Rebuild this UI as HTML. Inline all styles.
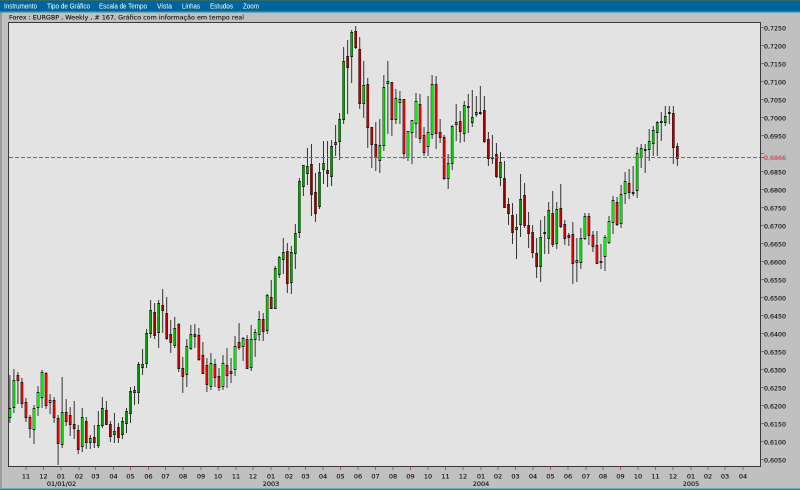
<!DOCTYPE html>
<html><head><meta charset="utf-8"><title>Forex EURGBP</title>
<style>
html,body{margin:0;padding:0;width:800px;height:490px;overflow:hidden;background:#c0c0c0}
svg{display:block;position:absolute;left:0;top:0}
.m{font-family:"Liberation Sans",sans-serif;font-size:7.2px;fill:#fff}
.t{font-family:"DejaVu Sans",sans-serif;font-size:6.5px;fill:#111;stroke:#111;stroke-width:.12}
.x{font-family:"DejaVu Sans",sans-serif;font-size:6.5px;fill:#111;stroke:#111;stroke-width:.12;text-anchor:middle}
</style></head><body>
<svg width="800" height="490" viewBox="0 0 800 490" xmlns="http://www.w3.org/2000/svg">
<rect width="800" height="490" fill="#c0c0c0"/>
<rect x="0" y="12" width="2" height="476" fill="#9c9c9c"/>
<rect width="800" height="1" fill="#2f6a6a"/>
<rect y="1" width="800" height="10" fill="#00659c"/>
<rect y="11" width="800" height="1.5" fill="#1a8c9c"/>
<rect y="488.5" width="800" height="1.5" fill="#2a9088"/>
<g class="mm">
<text class="m" x="4" y="8.5" textLength="33" lengthAdjust="spacingAndGlyphs">Instrumento</text>
<text class="m" x="47" y="8.5" textLength="43" lengthAdjust="spacingAndGlyphs">Tipo de Gráfico</text>
<text class="m" x="99" y="8.5" textLength="48" lengthAdjust="spacingAndGlyphs">Escala de Tempo</text>
<text class="m" x="157" y="8.5" textLength="15" lengthAdjust="spacingAndGlyphs">Vista</text>
<text class="m" x="182" y="8.5" textLength="18" lengthAdjust="spacingAndGlyphs">Linhas</text>
<text class="m" x="210" y="8.5" textLength="23" lengthAdjust="spacingAndGlyphs">Estudos</text>
<text class="m" x="243" y="8.5" textLength="16" lengthAdjust="spacingAndGlyphs">Zoom</text>
</g>
<text class="t" x="9" y="19.5" textLength="235" lengthAdjust="spacingAndGlyphs">Forex : EURGBP , Weekly , # 167, Gráfico com informação em tempo real</text>
<rect x="8.5" y="22.5" width="752" height="444" fill="#e3e3e3"/>
<path d="M8.5 22.5H760.5V466.5H8.5Z" fill="none" stroke="#3a3a3a" stroke-width="1"/>
<g id="chart"></g>
<path d="M9 157.5H760" stroke="#e8343c" stroke-width="1" stroke-dasharray="4 2" fill="none"/>
<g id="ticks"></g>
<text class="t" x="764" y="30.5" textLength="22" lengthAdjust="spacingAndGlyphs">0,7250</text>
<text class="t" x="764" y="48.5" textLength="22" lengthAdjust="spacingAndGlyphs">0,7200</text>
<text class="t" x="764" y="66.5" textLength="22" lengthAdjust="spacingAndGlyphs">0,7150</text>
<text class="t" x="764" y="84.5" textLength="22" lengthAdjust="spacingAndGlyphs">0,7100</text>
<text class="t" x="764" y="102.5" textLength="22" lengthAdjust="spacingAndGlyphs">0,7050</text>
<text class="t" x="764" y="120.5" textLength="22" lengthAdjust="spacingAndGlyphs">0,7000</text>
<text class="t" x="764" y="138.5" textLength="22" lengthAdjust="spacingAndGlyphs">0,6950</text>
<text class="t" x="764" y="160" textLength="22" lengthAdjust="spacingAndGlyphs" style="fill:#f0303c;stroke:#f0303c">0,6866</text>
<text class="t" x="764" y="174.5" textLength="22" lengthAdjust="spacingAndGlyphs">0,6850</text>
<text class="t" x="764" y="192.5" textLength="22" lengthAdjust="spacingAndGlyphs">0,6800</text>
<text class="t" x="764" y="210.5" textLength="22" lengthAdjust="spacingAndGlyphs">0,6750</text>
<text class="t" x="764" y="228.5" textLength="22" lengthAdjust="spacingAndGlyphs">0,6700</text>
<text class="t" x="764" y="246.5" textLength="22" lengthAdjust="spacingAndGlyphs">0,6650</text>
<text class="t" x="764" y="264.5" textLength="22" lengthAdjust="spacingAndGlyphs">0,6600</text>
<text class="t" x="764" y="282.5" textLength="22" lengthAdjust="spacingAndGlyphs">0,6550</text>
<text class="t" x="764" y="300.5" textLength="22" lengthAdjust="spacingAndGlyphs">0,6500</text>
<text class="t" x="764" y="318.5" textLength="22" lengthAdjust="spacingAndGlyphs">0,6450</text>
<text class="t" x="764" y="336.5" textLength="22" lengthAdjust="spacingAndGlyphs">0,6400</text>
<text class="t" x="764" y="354.5" textLength="22" lengthAdjust="spacingAndGlyphs">0,6350</text>
<text class="t" x="764" y="372.5" textLength="22" lengthAdjust="spacingAndGlyphs">0,6300</text>
<text class="t" x="764" y="390.5" textLength="22" lengthAdjust="spacingAndGlyphs">0,6250</text>
<text class="t" x="764" y="408.5" textLength="22" lengthAdjust="spacingAndGlyphs">0,6200</text>
<text class="t" x="764" y="426.5" textLength="22" lengthAdjust="spacingAndGlyphs">0,6150</text>
<text class="t" x="764" y="444.5" textLength="22" lengthAdjust="spacingAndGlyphs">0,6100</text>
<text class="t" x="764" y="462.5" textLength="22" lengthAdjust="spacingAndGlyphs">0,6050</text>
<text class="x" x="26" y="478.5">11</text><text class="x" x="43.5" y="478.5">12</text><text class="x" x="61" y="478.5">01</text><text class="x" x="79" y="478.5">02</text><text class="x" x="95.5" y="478.5">03</text><text class="x" x="113.5" y="478.5">04</text><text class="x" x="130.5" y="478.5">05</text><text class="x" x="148.5" y="478.5">06</text><text class="x" x="165.5" y="478.5">07</text><text class="x" x="183" y="478.5">08</text><text class="x" x="201" y="478.5">09</text><text class="x" x="218" y="478.5">10</text><text class="x" x="236" y="478.5">11</text><text class="x" x="253" y="478.5">12</text><text class="x" x="271" y="478.5">01</text><text class="x" x="289" y="478.5">02</text><text class="x" x="305.5" y="478.5">03</text><text class="x" x="323" y="478.5">04</text><text class="x" x="340.5" y="478.5">05</text><text class="x" x="358" y="478.5">06</text><text class="x" x="375.5" y="478.5">07</text><text class="x" x="393" y="478.5">08</text><text class="x" x="410.5" y="478.5">09</text><text class="x" x="428" y="478.5">10</text><text class="x" x="445.5" y="478.5">11</text><text class="x" x="463" y="478.5">12</text><text class="x" x="481" y="478.5">01</text><text class="x" x="498" y="478.5">02</text><text class="x" x="515.5" y="478.5">03</text><text class="x" x="533" y="478.5">04</text><text class="x" x="550.5" y="478.5">05</text><text class="x" x="568" y="478.5">06</text><text class="x" x="586" y="478.5">07</text><text class="x" x="603" y="478.5">08</text><text class="x" x="620.5" y="478.5">09</text><text class="x" x="638" y="478.5">10</text><text class="x" x="655.5" y="478.5">11</text><text class="x" x="673" y="478.5">12</text><text class="x" x="691" y="478.5">01</text><text class="x" x="708" y="478.5">02</text><text class="x" x="725" y="478.5">03</text><text class="x" x="743" y="478.5">04</text>
<text class="x" x="61.5" y="486">01/01/02</text>
<text class="x" x="271" y="486">2003</text>
<text class="x" x="481" y="486">2004</text>
<text class="x" x="691" y="486">2005</text>
</svg>
<script>
var D="375,408,417,422,g 369,380,407,412,g 372,375,380,403,r 378,382,403,407,r 398,402,417,421,r 415,417,428,437,r 405,408,429,443,g 386,392,407,415,g 370,372,397,407,g 372,373,405,408,r 394,400,402,413,g 397,400,417,422,r 415,418,443,464,r 377,412,444,447,g 399,412,421,425,r 407,415,424,435,r 401,424,428,438,r 425,430,449,453,r 408,417,446,451,g 417,421,442,448,r 435,438,442,448,g 425,437,442,447,r 411,425,445,447,g 397,408,425,427,g 401,410,424,424,r 421,424,436,441,r 413,431,434,442,g 423,427,437,442,r 417,421,434,438,g 408,411,423,432,g 387,391,413,422,g 386,390,392,404,g 362,364,392,403,g 349,364,367,374,g 329,333,363,367,g 300,310,333,337,g 303,312,335,338,r 300,303,332,347,g 289,305,310,332,r 297,313,338,339,r 320,334,342,352,r 317,328,345,347,g 323,324,368,371,r 357,368,376,392,r 339,346,374,386,g 325,334,348,349,g 324,334,336,347,r 328,335,359,360,r 342,355,373,373,r 358,365,384,391,r 353,363,386,389,g 359,364,377,386,r 368,376,387,390,r 355,363,386,389,g 348,365,375,387,r 358,371,373,382,r 336,346,369,375,g 323,342,347,349,r 337,338,346,360,g 335,339,368,368,r 325,339,367,370,g 329,332,339,356,g 311,319,334,340,g 313,319,331,340,r 294,295,330,333,g 280,297,308,308,r 266,268,308,308,g 256,257,274,277,g 238,252,259,273,g 243,251,283,292,r 246,252,282,293,g 224,233,253,268,g 178,181,232,237,g 165,165,186,195,g 148,166,173,184,g 144,164,194,215,r 173,192,213,221,r 163,172,206,208,g 141,163,169,183,g 141,170,173,186,r 140,146,176,185,g 125,142,144,155,g 113,119,141,159,g 47,61,119,123,g 40,56,67,113,r 30,32,56,82,g 26,31,47,48,r 37,49,103,108,r 61,85,103,117,g 78,84,127,147,r 127,127,144,167,r 122,144,157,170,r 119,145,160,172,g 75,87,145,150,g 61,81,83,133,g 82,82,119,135,r 89,98,119,123,g 91,99,102,123,g 99,99,153,158,r 131,131,157,160,g 120,120,132,163,g 93,101,123,137,g 94,104,138,142,r 127,135,152,155,r 96,132,146,155,g 75,84,134,138,g 76,84,133,148,r 119,132,137,142,r 135,137,178,179,r 154,163,178,188,g 125,126,163,169,g 104,122,124,140,g 111,121,131,142,r 101,105,133,141,g 94,106,107,132,r 90,117,122,126,g 96,112,114,116,g 86,112,113,114,r 96,110,141,142,r 132,139,158,165,r 135,157,158,163,r 143,154,176,177,r 152,162,177,185,g 161,178,207,207,r 198,204,213,224,r 203,215,232,243,r 214,227,229,258,g 174,199,224,236,g 183,195,225,227,r 212,225,233,247,r 225,232,252,257,r 238,253,266,277,r 220,237,266,281,g 216,232,233,253,r 202,210,238,253,g 191,213,244,246,r 202,209,243,248,g 184,208,226,227,r 220,224,238,244,r 233,235,237,245,r 222,234,263,283,r 238,260,262,281,g 228,238,262,268,g 213,216,238,239,g 213,216,235,244,r 231,235,246,251,r 231,245,263,263,r 244,261,262,268,r 235,237,256,270,g 216,221,242,243,g 196,200,222,233,g 197,202,224,225,r 185,194,223,227,g 172,181,193,203,g 169,183,192,198,r 166,192,193,195,g 147,153,190,197,g 144,148,157,167,g 144,149,150,172,g 129,141,149,160,g 126,130,143,155,g 121,122,132,155,g 112,121,122,140,r 106,116,122,125,g 106,112,113,123,r 106,113,147,163,r 143,146,158,165,r".split(" ");
var NS="http://www.w3.org/2000/svg",g=document.getElementById("chart");
function R(x,y,w,h,f){var e=document.createElementNS(NS,"rect");e.setAttribute("x",x);e.setAttribute("y",y);e.setAttribute("width",w);e.setAttribute("height",h);e.setAttribute("fill",f);g.appendChild(e);}
for(var i=0;i<D.length;i++){
 var p=D[i].split(","),h=+p[0],t=+p[1],b=+p[2],l=+p[3],c=p[4];
 var x=9.87+4.0211*i;
 var fr=x-Math.floor(x);
 var a=1-2*Math.abs(fr-.5);
 var v=Math.round(255-115*a);
 var col=c=="g"?"rgb(0,"+v+",0)":"rgb("+v+",0,0)";
 R(x-.5,h,1,l-h+1,"#333");
 R(x-1.35,t,2.7,b-t+1,"#1a1a1a");
 if(b-t>=2){R(x-.95,t+1,1.9,b-t-1,col);}
}
g=document.getElementById("ticks");
for(var n=0;n<25;n++){R(761,27+18*n,3,1,"#e8484e");}
R(761,157,3,1,"#f0303c");
var X=[26,43.5,61,79,95.5,113.5,130.5,148.5,165.5,183,201,218,236,253,271,289,305.5,323,340.5,358,375.5,393,410.5,428,445.5,463,481,498,515.5,533,550.5,568,586,603,620.5,638,655.5,673,691,708,725,743];
for(var k=0;k<X.length;k++){R(X[k]-.5,467,1,3,"#e8484e");}
</script>
</body></html>
